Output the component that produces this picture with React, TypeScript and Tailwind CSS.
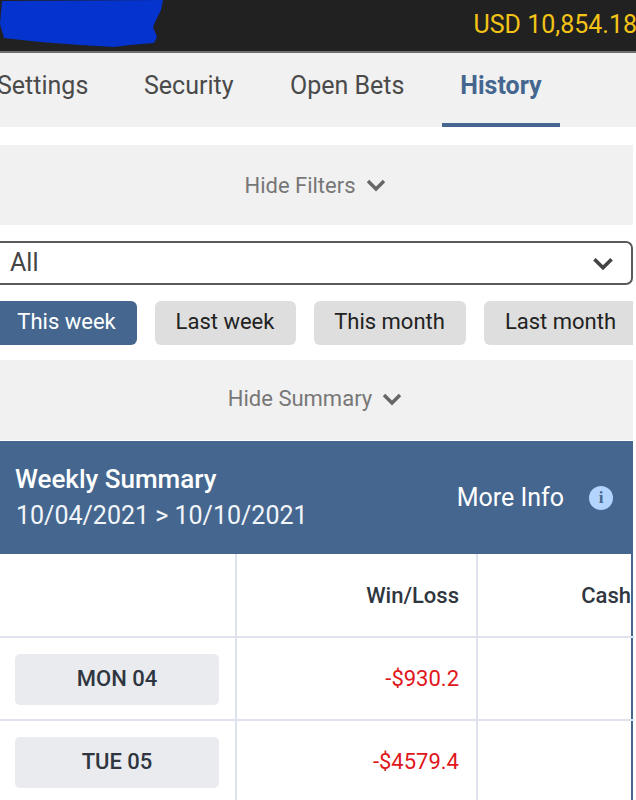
import React from "react";

function Chevron({ className }: { className: string }) {
  return (
    <svg viewBox="0 0 20 14" className={className} fill="none" stroke="currentColor" strokeWidth="3.4">
      <path d="M2 3 L10 11 L18 3" />
    </svg>
  );
}

function Bar({ label, h, mt, pb }: { label: string; h: string; mt: string; pb: string }) {
  return (
    <div className={`${h} ${mt} ${pb} w-[633px] bg-[#f1f1f1] flex items-center justify-center gap-[10px] text-[#777] text-[22px] pr-[3px]`}>
      <span>{label}</span>
      <Chevron className="w-[20px] h-[14px] text-[#666]" />
    </div>
  );
}

function Row({ day, amount }: { day: string; amount: string }) {
  return (
    <div className="h-[83px] grid grid-cols-[237px_241px_155px] border-b-2 border-[#dfe3ee]">
      <div className="border-r-2 border-[#dfe3ee] pl-[15px] pt-[16px]">
        <div className="w-[204px] h-[51px] pb-[2px] rounded-[5px] bg-[#eaebef] flex items-center justify-center text-[22px] font-medium text-[#2f3640]">
          {day}
        </div>
      </div>
      <div className="border-r-2 border-[#dfe3ee] flex items-center justify-end pr-[17px] text-[22px] text-[#e0161c]">
        {amount}
      </div>
      <div className="border-r-2 border-[#45678f]" />
    </div>
  );
}

export default function App() {
  const chip = "h-[44px] pb-[3px] rounded-[6px] flex items-center justify-center text-[22px] shrink-0";
  return (
    <div className="w-[636px] h-[800px] overflow-hidden bg-white font-['Roboto',sans-serif]">
      <header className="h-[53px] bg-[#212121] border-b-2 border-[#6f6f6f] flex items-start justify-between">
        <svg viewBox="0 0 164 48" className="w-[164px] h-[48px] shrink-0">
          <path
            fill="#0533cd"
            d="M2 1 L163 0 L161 10 L156 20 L153 27 L157 37 L154 43 L130 45 L114 47 L80 45 L40 42 L4 38 L0 24 Z"
          />
        </svg>
        <span className="text-[#f3c316] text-[25px] leading-[50px] whitespace-nowrap -mr-[1px]">USD 10,854.18</span>
      </header>

      <nav className="h-[74px] bg-[#f1f1f1] flex text-[25px] text-[#4a4a4a] relative">
        <span className="-ml-[3px] w-[147px] pt-[14px]">Settings</span>
        <span className="w-[146px] pt-[14px]">Security</span>
        <span className="w-[152px] pt-[14px]">Open Bets</span>
        <span className="w-[118px] h-[74px] border-b-4 border-[#45678f] text-center font-bold text-[#45678f] pt-[14px]">
          History
        </span>
      </nav>

      <Bar label="Hide Filters" h="h-[80px]" mt="mt-[18px]" pb="pb-0" />

      <div className="mt-[16px] h-[44px] w-[640px] -ml-[7px] border-2 border-[#5a5a5a] rounded-[7px] flex items-center justify-between pl-[15px] pr-[17px] text-[25px] text-[#444]">
        <span>All</span>
        <Chevron className="w-[22px] h-[15px] text-[#444]" />
      </div>

      <div className="mt-[16px] flex w-[633px] overflow-hidden text-[22px]">
        <div className={`${chip} w-[145px] -ml-[8px] pl-[4px] bg-[#45678f] text-white`}>This week</div>
        <div className={`${chip} w-[141px] ml-[18px] pr-[1px] bg-[#dedede] text-[#222]`}>Last week</div>
        <div className={`${chip} w-[152px] ml-[18px] pr-[1px] bg-[#dedede] text-[#222]`}>This month</div>
        <div className={`${chip} w-[160px] ml-[18px] bg-[#dedede] text-[#222] pr-[7px]`}>Last month</div>
      </div>

      <Bar label="Hide Summary" h="h-[80px]" mt="mt-[15px]" pb="pb-[3px]" />

      <section className="w-[633px] h-[113px] mt-[1px] bg-[#45678f] text-white flex items-center justify-between pl-[15px] pr-[20px]">
        <div>
          <div className="text-[26px] font-medium leading-[35px]">Weekly Summary</div>
          <div className="text-[25px] leading-[37px] text-[#f2f5f9] pl-[1px]">10/04/2021 &gt; 10/10/2021</div>
        </div>
        <div className="flex items-center gap-[25px]">
          <span className="text-[25px]">More Info</span>
          <span className="w-[24px] h-[24px] rounded-full bg-[#b3d4ff] flex items-center justify-center text-[#45678f] text-[17px] font-bold font-['Liberation_Serif',serif]">
            i
          </span>
        </div>
      </section>

      <div className="w-[634px]">
        <div className="h-[84px] grid grid-cols-[237px_241px_155px] border-b-2 border-[#dfe3ee] text-[22px] font-medium text-[#2f3640]">
          <div className="border-r-2 border-[#dfe3ee]" />
          <div className="border-r-2 border-[#dfe3ee] flex items-center justify-end pr-[17px]">Win/Loss</div>
          <div className="border-r-2 border-[#45678f] flex items-center justify-end overflow-hidden whitespace-nowrap">Cash</div>
        </div>
        <Row day="MON 04" amount="-$930.2" />
        <Row day="TUE 05" amount="-$4579.4" />
      </div>
    </div>
  );
}
